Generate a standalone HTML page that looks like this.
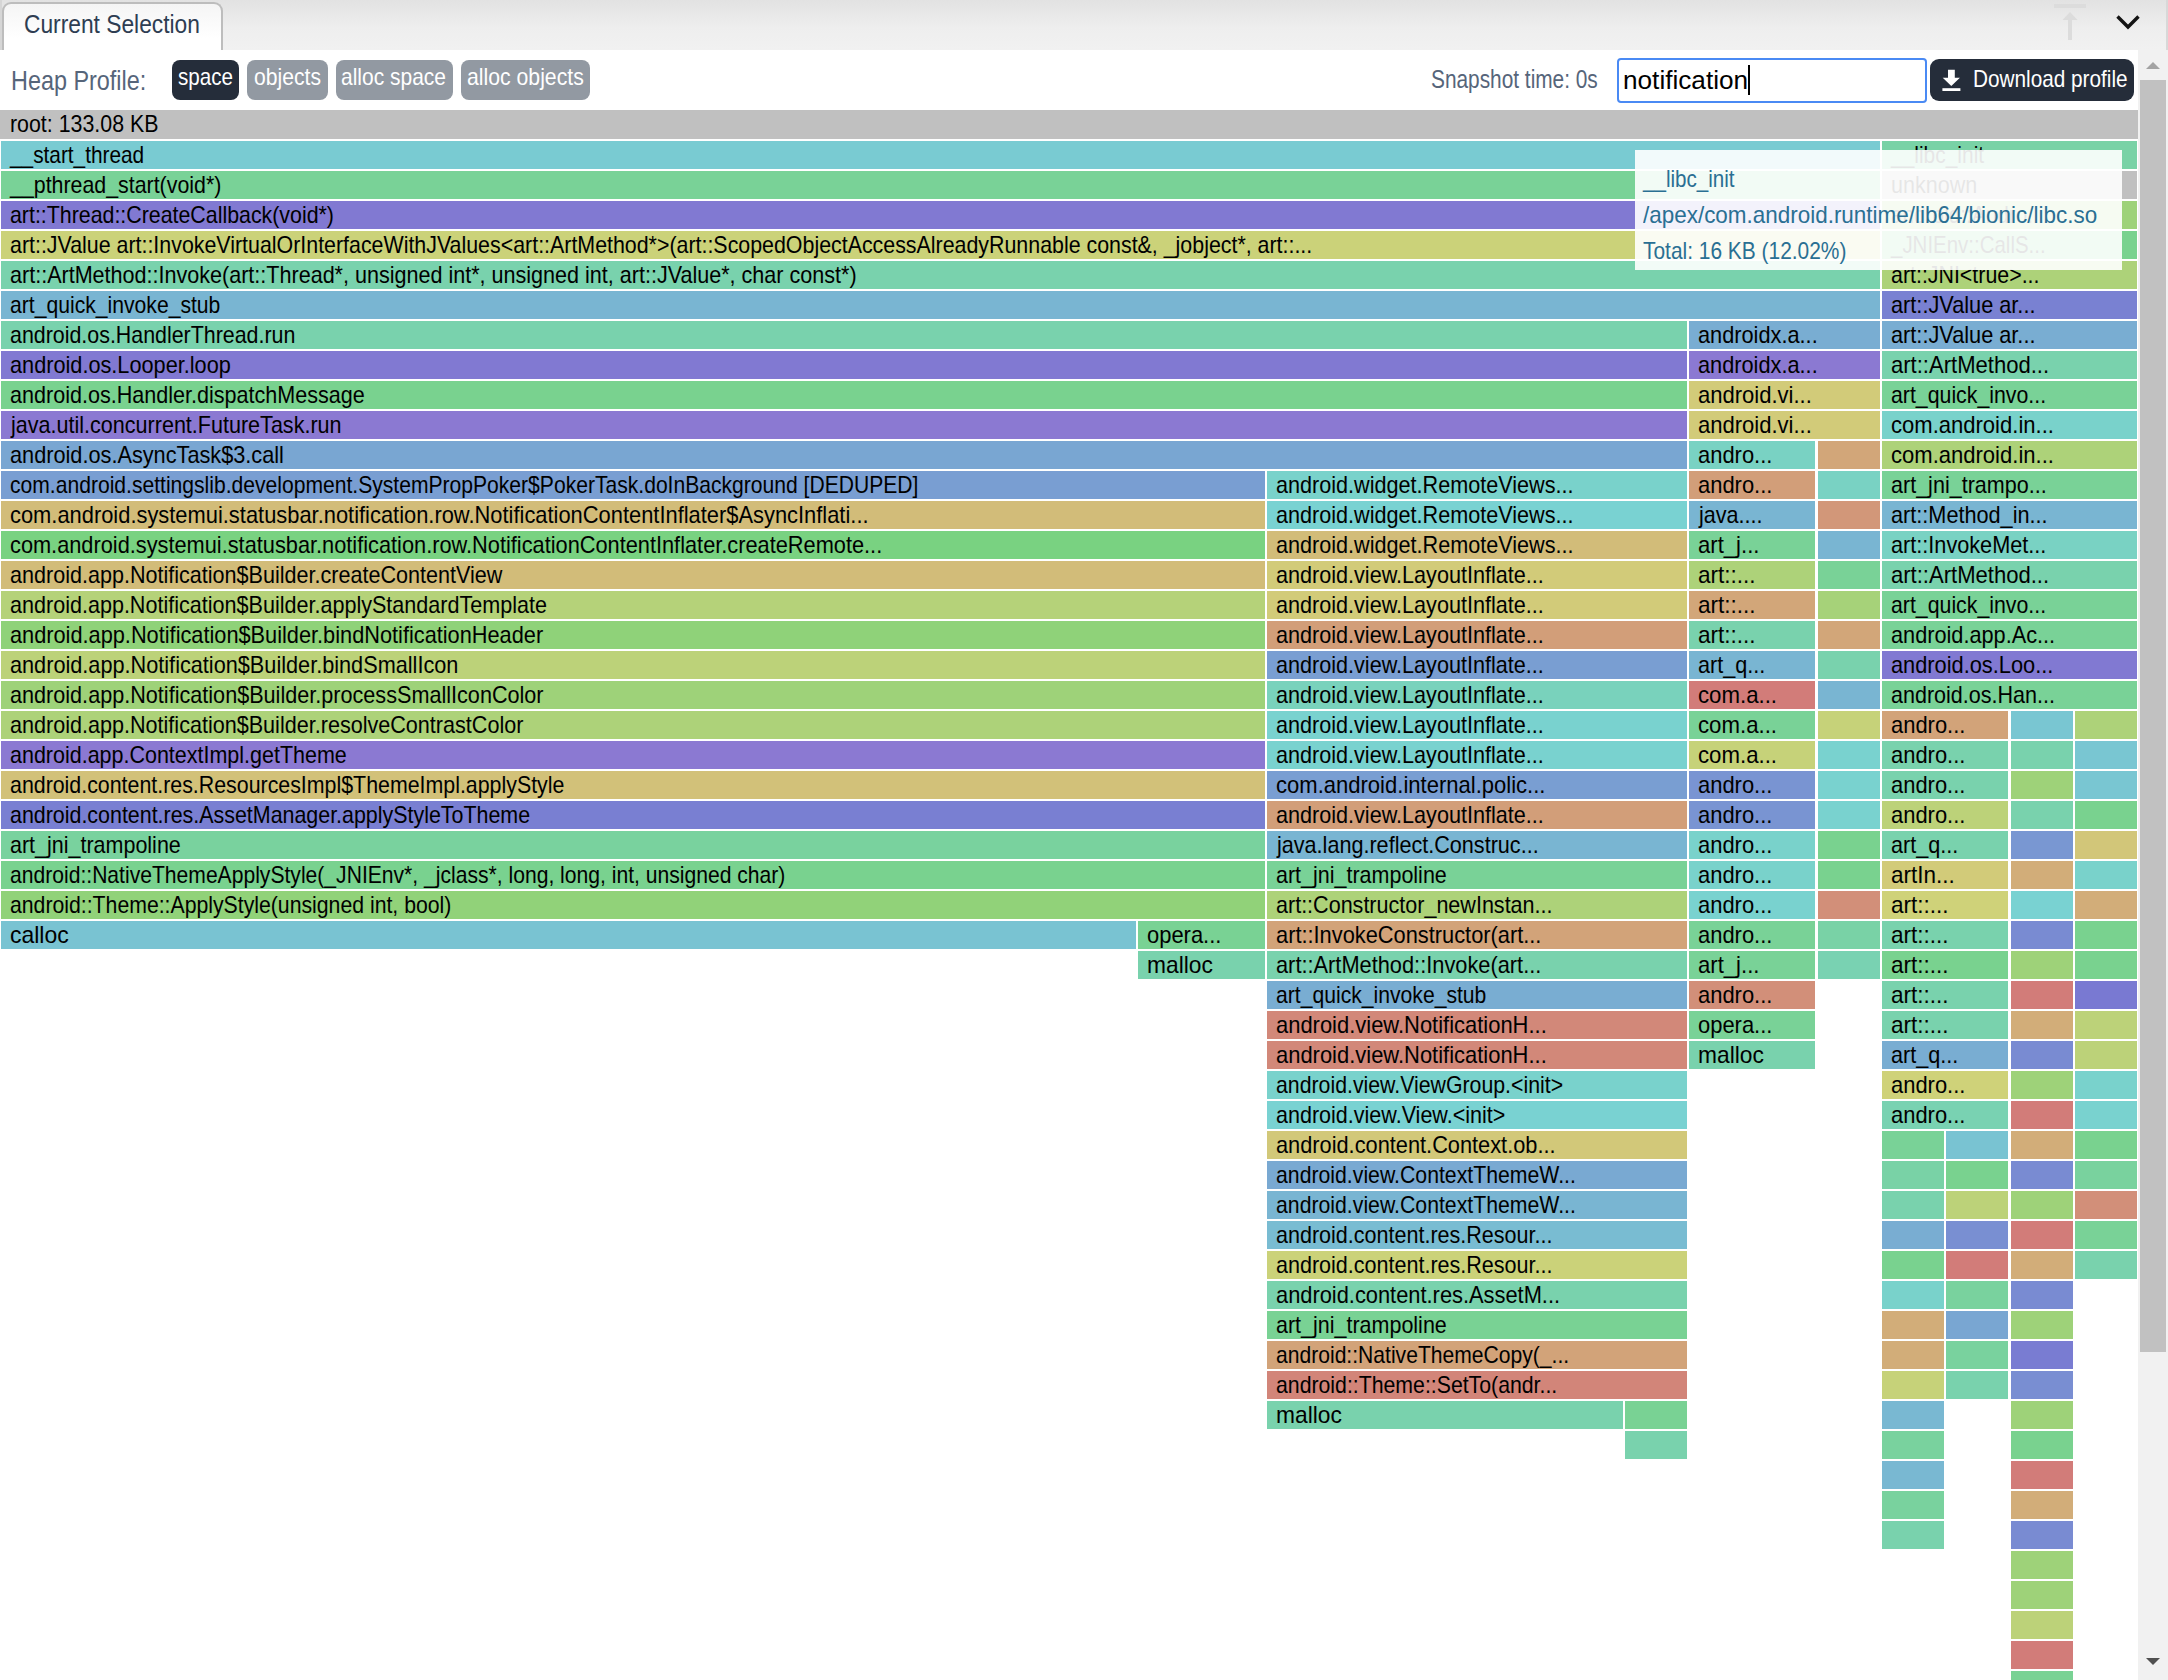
<!DOCTYPE html>
<html><head><meta charset="utf-8"><style>
*{box-sizing:border-box;margin:0;padding:0}
html,body{width:2168px;height:1680px;overflow:hidden;background:#fff;font-family:"Liberation Sans",sans-serif}
.a{position:absolute}
.bar{position:absolute;height:28px;overflow:hidden}
.lb{position:absolute;left:9px;top:0;font-size:24px;line-height:28px;color:#000;white-space:pre;transform-origin:0 0;transform:scaleX(0.89)}
.t{position:absolute;white-space:pre;transform-origin:0 0}
</style></head><body>

<div class="a" style="left:0;top:0;width:2168px;height:50px;background:linear-gradient(#e2e2e2,#eeeeee 55%,#f1f1f1)"></div>
<div class="a" style="left:0;top:0;width:2px;height:50px;background:#d6d6d6"></div>
<div class="a" style="left:2166px;top:0;width:2px;height:50px;background:#d8d8d8"></div>
<div class="a" style="left:2px;top:2px;width:221px;height:48px;border:2px solid #bdbdbd;border-bottom:none;border-radius:9px 9px 0 0;background:linear-gradient(#f5f5f5,#fff 75%)"></div>
<div class="t" style="left:24.10px;top:6.19px;font-size:26px;line-height:36px;color:#2e3d52;transform:scaleX(0.8756);">Current Selection</div>
<svg class="a" style="left:2040px;top:0" width="128" height="50" viewBox="0 0 128 50"><rect x="14" y="4" width="32" height="4" fill="#dcdcdc"/><path d="M30 12 L37.5 20 L32 20 L32 40 L28 40 L28 20 L22.5 20 Z" fill="#dcdcdc"/><path d="M77.5 16.5 L88 27 L98.5 16.5" stroke="#141414" stroke-width="3.4" fill="none"/></svg>
<div class="a" style="left:2138px;top:50px;width:30px;height:1630px;background:#f1f1f1"></div>
<div class="a" style="left:2140px;top:80px;width:26px;height:1272px;background:#c1c1c1"></div>
<svg class="a" style="left:2138px;top:50px" width="30" height="30"><path d="M8 19 L15 12 L22 19 Z" fill="#a3a3a3"/></svg>
<svg class="a" style="left:2138px;top:1650px" width="30" height="30"><path d="M8 8 L22 8 L15 15 Z" fill="#505050"/></svg>
<div class="t" style="left:10.90px;top:60.70px;font-size:28px;line-height:39px;color:#56657a;transform:scaleX(0.8358);">Heap Profile:</div>
<div class="a" style="left:172px;top:60px;width:67px;height:40px;background:#252d3a;border-radius:8px"></div>
<div class="t" style="left:177.80px;top:60.18px;font-size:24px;line-height:34px;color:#fff;transform:scaleX(0.8594);">space</div>
<div class="a" style="left:247px;top:60px;width:81px;height:40px;background:#9299a2;border-radius:8px"></div>
<div class="t" style="left:253.50px;top:60.18px;font-size:24px;line-height:34px;color:#fff;transform:scaleX(0.8803);">objects</div>
<div class="a" style="left:336px;top:60px;width:117px;height:40px;background:#9299a2;border-radius:8px"></div>
<div class="t" style="left:341.40px;top:60.18px;font-size:24px;line-height:34px;color:#fff;transform:scaleX(0.8742);">alloc space</div>
<div class="a" style="left:461px;top:60px;width:129px;height:40px;background:#9299a2;border-radius:8px"></div>
<div class="t" style="left:466.60px;top:60.18px;font-size:24px;line-height:34px;color:#fff;transform:scaleX(0.8841);">alloc objects</div>
<div class="t" style="left:1430.70px;top:61.84px;font-size:25px;line-height:35px;color:#56657a;transform:scaleX(0.8335);">Snapshot time: 0s</div>
<div class="a" style="left:1617px;top:58px;width:310px;height:45px;border:2.4px solid #4a8af4;border-radius:4px;background:#fff"></div>
<div class="t" style="left:1622.80px;top:62.09px;font-size:26px;line-height:36px;color:#000;transform:scaleX(1.0065);">notification</div>
<div class="a" style="left:1748px;top:65px;width:2px;height:30px;background:#000"></div>
<div class="a" style="left:1930px;top:59px;width:204px;height:42px;background:#252d3a;border-radius:9px"></div>
<svg class="a" style="left:1930px;top:59px" width="40" height="42" viewBox="0 0 40 42"><path d="M18 10.7 h6.8 v8 h5.1 l-8.6 8.4 l-8.6 -8.4 h5.3 z" fill="#fff"/><rect x="12.4" y="29.2" width="18" height="2.8" fill="#fff"/></svg>
<div class="t" style="left:1972.70px;top:61.68px;font-size:24px;line-height:34px;color:#fff;transform:scaleX(0.8648);">Download profile</div>
<div class="bar" style="left:0;top:110px;width:2138px;height:29px;background:#c0c0c0"><div class="lb" style="left:10px;line-height:28px">root: 133.08 KB</div></div>
<div class="bar" style="left:1px;top:141px;width:1879px;background:hsl(185,50%,65%)"><div class="lb" style="left:9.47px;transform:scaleX(0.8667)">__start_thread</div></div>
<div class="bar" style="left:1882px;top:141px;width:255px;background:hsl(150,50%,65%)"><div class="lb" style="left:9.47px;transform:scaleX(0.8722)">__libc_init</div></div>
<div class="bar" style="left:1px;top:171px;width:1879px;background:hsl(140,50%,65%)"><div class="lb" style="left:9.49px;transform:scaleX(0.8899)">__pthread_start(void*)</div></div>
<div class="bar" style="left:1882px;top:171px;width:255px;background:#c0c0c0"><div class="lb" style="left:8.60px;transform:scaleX(0.8979)">unknown</div></div>
<div class="bar" style="left:1px;top:201px;width:1879px;background:hsl(245,50%,65%)"><div class="lb" style="left:8.60px;transform:scaleX(0.8896)">art::Thread::CreateCallback(void*)</div></div>
<div class="bar" style="left:1882px;top:201px;width:255px;background:hsl(95,50%,65%)"><div class="lb" style="left:8.60px;transform:scaleX(0.8655)">android::Andro...</div></div>
<div class="bar" style="left:1px;top:231px;width:1879px;background:hsl(65,50%,65%)"><div class="lb" style="left:8.60px;transform:scaleX(0.8907)">art::JValue art::InvokeVirtualOrInterfaceWithJValues&lt;art::ArtMethod*&gt;(art::ScopedObjectAccessAlreadyRunnable const&amp;, _jobject*, art::...</div></div>
<div class="bar" style="left:1882px;top:231px;width:255px;background:hsl(135,50%,65%)"><div class="lb" style="left:9.45px;transform:scaleX(0.8527)">_JNIEnv::CallS...</div></div>
<div class="bar" style="left:1px;top:261px;width:1879px;background:hsl(155,50%,65%)"><div class="lb" style="left:8.60px;transform:scaleX(0.8980)">art::ArtMethod::Invoke(art::Thread*, unsigned int*, unsigned int, art::JValue*, char const*)</div></div>
<div class="bar" style="left:1882px;top:261px;width:255px;background:hsl(85,50%,65%)"><div class="lb" style="left:8.60px;transform:scaleX(0.8904)">art::JNI&lt;true&gt;...</div></div>
<div class="bar" style="left:1px;top:291px;width:1879px;background:hsl(200,50%,65%)"><div class="lb" style="left:8.60px;transform:scaleX(0.8808)">art_quick_invoke_stub</div></div>
<div class="bar" style="left:1882px;top:291px;width:255px;background:hsl(235,50%,65%)"><div class="lb" style="left:8.60px;transform:scaleX(0.9050)">art::JValue ar...</div></div>
<div class="bar" style="left:1px;top:321px;width:1686px;background:hsl(155,50%,65%)"><div class="lb" style="left:8.60px;transform:scaleX(0.8912)">android.os.HandlerThread.run</div></div>
<div class="bar" style="left:1689px;top:321px;width:191px;background:hsl(205,50%,65%)"><div class="lb" style="left:8.60px;transform:scaleX(0.9061)">androidx.a...</div></div>
<div class="bar" style="left:1882px;top:321px;width:255px;background:hsl(205,50%,65%)"><div class="lb" style="left:8.60px;transform:scaleX(0.9050)">art::JValue ar...</div></div>
<div class="bar" style="left:1px;top:351px;width:1686px;background:hsl(245,50%,65%)"><div class="lb" style="left:8.60px;transform:scaleX(0.9041)">android.os.Looper.loop</div></div>
<div class="bar" style="left:1689px;top:351px;width:191px;background:hsl(252,50%,65%)"><div class="lb" style="left:8.60px;transform:scaleX(0.9061)">androidx.a...</div></div>
<div class="bar" style="left:1882px;top:351px;width:255px;background:hsl(155,50%,65%)"><div class="lb" style="left:8.60px;transform:scaleX(0.9186)">art::ArtMethod...</div></div>
<div class="bar" style="left:1px;top:381px;width:1686px;background:hsl(135,50%,65%)"><div class="lb" style="left:8.60px;transform:scaleX(0.8982)">android.os.Handler.dispatchMessage</div></div>
<div class="bar" style="left:1689px;top:381px;width:191px;background:hsl(55,50%,65%)"><div class="lb" style="left:8.60px;transform:scaleX(0.9177)">android.vi...</div></div>
<div class="bar" style="left:1882px;top:381px;width:255px;background:hsl(140,50%,65%)"><div class="lb" style="left:8.60px;transform:scaleX(0.8874)">art_quick_invo...</div></div>
<div class="bar" style="left:1px;top:411px;width:1686px;background:hsl(252,50%,65%)"><div class="lb" style="left:9.50px;transform:scaleX(0.8978)">java.util.concurrent.FutureTask.run</div></div>
<div class="bar" style="left:1689px;top:411px;width:191px;background:hsl(55,50%,65%)"><div class="lb" style="left:8.60px;transform:scaleX(0.9177)">android.vi...</div></div>
<div class="bar" style="left:1882px;top:411px;width:255px;background:hsl(175,50%,65%)"><div class="lb" style="left:8.60px;transform:scaleX(0.9181)">com.android.in...</div></div>
<div class="bar" style="left:1px;top:441px;width:1686px;background:hsl(210,50%,65%)"><div class="lb" style="left:8.60px;transform:scaleX(0.9046)">android.os.AsyncTask$3.call</div></div>
<div class="bar" style="left:1689px;top:441px;width:126px;background:hsl(170,50%,65%)"><div class="lb" style="left:8.60px;transform:scaleX(0.9136)">andro...</div></div>
<div class="bar" style="left:1818px;top:441px;width:62px;background:hsl(30,50%,65%)"></div>
<div class="bar" style="left:1882px;top:441px;width:255px;background:hsl(85,50%,65%)"><div class="lb" style="left:8.60px;transform:scaleX(0.9181)">com.android.in...</div></div>
<div class="bar" style="left:1px;top:471px;width:1264px;background:hsl(215,50%,65%)"><div class="lb" style="left:8.60px;transform:scaleX(0.8787)">com.android.settingslib.development.SystemPropPoker$PokerTask.doInBackground [DEDUPED]</div></div>
<div class="bar" style="left:1267px;top:471px;width:420px;background:hsl(175,50%,65%)"><div class="lb" style="left:8.60px;transform:scaleX(0.9003)">android.widget.RemoteViews...</div></div>
<div class="bar" style="left:1689px;top:471px;width:126px;background:hsl(25,50%,65%)"><div class="lb" style="left:8.60px;transform:scaleX(0.9136)">andro...</div></div>
<div class="bar" style="left:1818px;top:471px;width:62px;background:hsl(170,50%,65%)"></div>
<div class="bar" style="left:1882px;top:471px;width:255px;background:hsl(140,50%,65%)"><div class="lb" style="left:8.60px;transform:scaleX(0.8977)">art_jni_trampo...</div></div>
<div class="bar" style="left:1px;top:501px;width:1264px;background:hsl(45,50%,65%)"><div class="lb" style="left:8.60px;transform:scaleX(0.9116)">com.android.systemui.statusbar.notification.row.NotificationContentInflater$AsyncInflati...</div></div>
<div class="bar" style="left:1267px;top:501px;width:420px;background:hsl(180,50%,65%)"><div class="lb" style="left:8.60px;transform:scaleX(0.9003)">android.widget.RemoteViews...</div></div>
<div class="bar" style="left:1689px;top:501px;width:126px;background:hsl(200,50%,65%)"><div class="lb" style="left:9.50px;transform:scaleX(0.8986)">java....</div></div>
<div class="bar" style="left:1818px;top:501px;width:62px;background:hsl(20,50%,65%)"></div>
<div class="bar" style="left:1882px;top:501px;width:255px;background:hsl(200,50%,65%)"><div class="lb" style="left:8.60px;transform:scaleX(0.9029)">art::Method_in...</div></div>
<div class="bar" style="left:1px;top:531px;width:1264px;background:hsl(125,50%,65%)"><div class="lb" style="left:8.60px;transform:scaleX(0.9068)">com.android.systemui.statusbar.notification.row.NotificationContentInflater.createRemote...</div></div>
<div class="bar" style="left:1267px;top:531px;width:420px;background:hsl(45,50%,65%)"><div class="lb" style="left:8.60px;transform:scaleX(0.9003)">android.widget.RemoteViews...</div></div>
<div class="bar" style="left:1689px;top:531px;width:126px;background:hsl(140,50%,65%)"><div class="lb" style="left:8.60px;transform:scaleX(0.9209)">art_j...</div></div>
<div class="bar" style="left:1818px;top:531px;width:62px;background:hsl(200,50%,65%)"></div>
<div class="bar" style="left:1882px;top:531px;width:255px;background:hsl(170,50%,65%)"><div class="lb" style="left:8.60px;transform:scaleX(0.9029)">art::InvokeMet...</div></div>
<div class="bar" style="left:1px;top:561px;width:1264px;background:hsl(45,50%,65%)"><div class="lb" style="left:8.60px;transform:scaleX(0.8984)">android.app.Notification$Builder.createContentView</div></div>
<div class="bar" style="left:1267px;top:561px;width:420px;background:hsl(55,50%,65%)"><div class="lb" style="left:8.60px;transform:scaleX(0.9000)">android.view.LayoutInflate...</div></div>
<div class="bar" style="left:1689px;top:561px;width:126px;background:hsl(85,50%,65%)"><div class="lb" style="left:8.60px;transform:scaleX(0.9393)">art::...</div></div>
<div class="bar" style="left:1818px;top:561px;width:62px;background:hsl(140,50%,65%)"></div>
<div class="bar" style="left:1882px;top:561px;width:255px;background:hsl(155,50%,65%)"><div class="lb" style="left:8.60px;transform:scaleX(0.9186)">art::ArtMethod...</div></div>
<div class="bar" style="left:1px;top:591px;width:1264px;background:hsl(80,50%,65%)"><div class="lb" style="left:8.60px;transform:scaleX(0.8983)">android.app.Notification$Builder.applyStandardTemplate</div></div>
<div class="bar" style="left:1267px;top:591px;width:420px;background:hsl(55,50%,65%)"><div class="lb" style="left:8.60px;transform:scaleX(0.9000)">android.view.LayoutInflate...</div></div>
<div class="bar" style="left:1689px;top:591px;width:126px;background:hsl(30,50%,65%)"><div class="lb" style="left:8.60px;transform:scaleX(0.9393)">art::...</div></div>
<div class="bar" style="left:1818px;top:591px;width:62px;background:hsl(90,50%,65%)"></div>
<div class="bar" style="left:1882px;top:591px;width:255px;background:hsl(140,50%,65%)"><div class="lb" style="left:8.60px;transform:scaleX(0.8874)">art_quick_invo...</div></div>
<div class="bar" style="left:1px;top:621px;width:1264px;background:hsl(105,50%,65%)"><div class="lb" style="left:8.60px;transform:scaleX(0.9061)">android.app.Notification$Builder.bindNotificationHeader</div></div>
<div class="bar" style="left:1267px;top:621px;width:420px;background:hsl(25,50%,65%)"><div class="lb" style="left:8.60px;transform:scaleX(0.9000)">android.view.LayoutInflate...</div></div>
<div class="bar" style="left:1689px;top:621px;width:126px;background:hsl(155,50%,65%)"><div class="lb" style="left:8.60px;transform:scaleX(0.9393)">art::...</div></div>
<div class="bar" style="left:1818px;top:621px;width:62px;background:hsl(30,50%,65%)"></div>
<div class="bar" style="left:1882px;top:621px;width:255px;background:hsl(140,50%,65%)"><div class="lb" style="left:8.60px;transform:scaleX(0.9044)">android.app.Ac...</div></div>
<div class="bar" style="left:1px;top:651px;width:1264px;background:hsl(75,50%,65%)"><div class="lb" style="left:8.60px;transform:scaleX(0.9034)">android.app.Notification$Builder.bindSmallIcon</div></div>
<div class="bar" style="left:1267px;top:651px;width:420px;background:hsl(215,50%,65%)"><div class="lb" style="left:8.60px;transform:scaleX(0.9000)">android.view.LayoutInflate...</div></div>
<div class="bar" style="left:1689px;top:651px;width:126px;background:hsl(200,50%,65%)"><div class="lb" style="left:8.60px;transform:scaleX(0.9013)">art_q...</div></div>
<div class="bar" style="left:1818px;top:651px;width:62px;background:hsl(155,50%,65%)"></div>
<div class="bar" style="left:1882px;top:651px;width:255px;background:hsl(245,50%,65%)"><div class="lb" style="left:8.60px;transform:scaleX(0.9078)">android.os.Loo...</div></div>
<div class="bar" style="left:1px;top:681px;width:1264px;background:hsl(95,50%,65%)"><div class="lb" style="left:8.60px;transform:scaleX(0.9008)">android.app.Notification$Builder.processSmallIconColor</div></div>
<div class="bar" style="left:1267px;top:681px;width:420px;background:hsl(165,50%,65%)"><div class="lb" style="left:8.60px;transform:scaleX(0.9000)">android.view.LayoutInflate...</div></div>
<div class="bar" style="left:1689px;top:681px;width:126px;background:hsl(2,50%,65%)"><div class="lb" style="left:8.60px;transform:scaleX(0.9259)">com.a...</div></div>
<div class="bar" style="left:1818px;top:681px;width:62px;background:hsl(200,50%,65%)"></div>
<div class="bar" style="left:1882px;top:681px;width:255px;background:hsl(140,50%,65%)"><div class="lb" style="left:8.60px;transform:scaleX(0.8973)">android.os.Han...</div></div>
<div class="bar" style="left:1px;top:711px;width:1264px;background:hsl(85,50%,65%)"><div class="lb" style="left:8.60px;transform:scaleX(0.8991)">android.app.Notification$Builder.resolveContrastColor</div></div>
<div class="bar" style="left:1267px;top:711px;width:420px;background:hsl(178,50%,65%)"><div class="lb" style="left:8.60px;transform:scaleX(0.9000)">android.view.LayoutInflate...</div></div>
<div class="bar" style="left:1689px;top:711px;width:126px;background:hsl(140,50%,65%)"><div class="lb" style="left:8.60px;transform:scaleX(0.9259)">com.a...</div></div>
<div class="bar" style="left:1818px;top:711px;width:62px;background:hsl(68,50%,65%)"></div>
<div class="bar" style="left:1882px;top:711px;width:126px;background:hsl(28,50%,65%)"><div class="lb" style="left:8.60px;transform:scaleX(0.9136)">andro...</div></div>
<div class="bar" style="left:2010.5px;top:711px;width:62.5px;background:hsl(188,50%,65%)"></div>
<div class="bar" style="left:2075px;top:711px;width:62px;background:hsl(85,50%,65%)"></div>
<div class="bar" style="left:1px;top:741px;width:1264px;background:hsl(252,50%,65%)"><div class="lb" style="left:8.60px;transform:scaleX(0.8952)">android.app.ContextImpl.getTheme</div></div>
<div class="bar" style="left:1267px;top:741px;width:420px;background:hsl(178,50%,65%)"><div class="lb" style="left:8.60px;transform:scaleX(0.9000)">android.view.LayoutInflate...</div></div>
<div class="bar" style="left:1689px;top:741px;width:126px;background:hsl(68,50%,65%)"><div class="lb" style="left:8.60px;transform:scaleX(0.9259)">com.a...</div></div>
<div class="bar" style="left:1818px;top:741px;width:62px;background:hsl(178,50%,65%)"></div>
<div class="bar" style="left:1882px;top:741px;width:126px;background:hsl(155,50%,65%)"><div class="lb" style="left:8.60px;transform:scaleX(0.9136)">andro...</div></div>
<div class="bar" style="left:2010.5px;top:741px;width:62.5px;background:hsl(155,50%,65%)"></div>
<div class="bar" style="left:2075px;top:741px;width:62px;background:hsl(188,50%,65%)"></div>
<div class="bar" style="left:1px;top:771px;width:1264px;background:hsl(48,50%,65%)"><div class="lb" style="left:8.60px;transform:scaleX(0.8899)">android.content.res.ResourcesImpl$ThemeImpl.applyStyle</div></div>
<div class="bar" style="left:1267px;top:771px;width:420px;background:hsl(215,50%,65%)"><div class="lb" style="left:8.60px;transform:scaleX(0.9181)">com.android.internal.polic...</div></div>
<div class="bar" style="left:1689px;top:771px;width:126px;background:hsl(222,50%,65%)"><div class="lb" style="left:8.60px;transform:scaleX(0.9136)">andro...</div></div>
<div class="bar" style="left:1818px;top:771px;width:62px;background:hsl(178,50%,65%)"></div>
<div class="bar" style="left:1882px;top:771px;width:126px;background:hsl(155,50%,65%)"><div class="lb" style="left:8.60px;transform:scaleX(0.9136)">andro...</div></div>
<div class="bar" style="left:2010.5px;top:771px;width:62.5px;background:hsl(95,50%,65%)"></div>
<div class="bar" style="left:2075px;top:771px;width:62px;background:hsl(188,50%,65%)"></div>
<div class="bar" style="left:1px;top:801px;width:1264px;background:hsl(236,50%,65%)"><div class="lb" style="left:8.60px;transform:scaleX(0.8921)">android.content.res.AssetManager.applyStyleToTheme</div></div>
<div class="bar" style="left:1267px;top:801px;width:420px;background:hsl(25,50%,65%)"><div class="lb" style="left:8.60px;transform:scaleX(0.9000)">android.view.LayoutInflate...</div></div>
<div class="bar" style="left:1689px;top:801px;width:126px;background:hsl(222,50%,65%)"><div class="lb" style="left:8.60px;transform:scaleX(0.9136)">andro...</div></div>
<div class="bar" style="left:1818px;top:801px;width:62px;background:hsl(178,50%,65%)"></div>
<div class="bar" style="left:1882px;top:801px;width:126px;background:hsl(75,50%,65%)"><div class="lb" style="left:8.60px;transform:scaleX(0.9136)">andro...</div></div>
<div class="bar" style="left:2010.5px;top:801px;width:62.5px;background:hsl(155,50%,65%)"></div>
<div class="bar" style="left:2075px;top:801px;width:62px;background:hsl(135,50%,65%)"></div>
<div class="bar" style="left:1px;top:831px;width:1264px;background:hsl(145,50%,65%)"><div class="lb" style="left:8.60px;transform:scaleX(0.8953)">art_jni_trampoline</div></div>
<div class="bar" style="left:1267px;top:831px;width:420px;background:hsl(200,50%,65%)"><div class="lb" style="left:9.50px;transform:scaleX(0.8997)">java.lang.reflect.Construc...</div></div>
<div class="bar" style="left:1689px;top:831px;width:126px;background:hsl(175,50%,65%)"><div class="lb" style="left:8.60px;transform:scaleX(0.9136)">andro...</div></div>
<div class="bar" style="left:1818px;top:831px;width:62px;background:hsl(135,50%,65%)"></div>
<div class="bar" style="left:1882px;top:831px;width:126px;background:hsl(155,50%,65%)"><div class="lb" style="left:8.60px;transform:scaleX(0.9013)">art_q...</div></div>
<div class="bar" style="left:2010.5px;top:831px;width:62.5px;background:hsl(220,50%,65%)"></div>
<div class="bar" style="left:2075px;top:831px;width:62px;background:hsl(52,50%,65%)"></div>
<div class="bar" style="left:1px;top:861px;width:1264px;background:hsl(135,50%,65%)"><div class="lb" style="left:8.60px;transform:scaleX(0.8793)">android::NativeThemeApplyStyle(_JNIEnv*, _jclass*, long, long, int, unsigned char)</div></div>
<div class="bar" style="left:1267px;top:861px;width:420px;background:hsl(140,50%,65%)"><div class="lb" style="left:8.60px;transform:scaleX(0.8953)">art_jni_trampoline</div></div>
<div class="bar" style="left:1689px;top:861px;width:126px;background:hsl(175,50%,65%)"><div class="lb" style="left:8.60px;transform:scaleX(0.9136)">andro...</div></div>
<div class="bar" style="left:1818px;top:861px;width:62px;background:hsl(135,50%,65%)"></div>
<div class="bar" style="left:1882px;top:861px;width:126px;background:hsl(55,50%,65%)"><div class="lb" style="left:8.60px;transform:scaleX(0.9368)">artIn...</div></div>
<div class="bar" style="left:2010.5px;top:861px;width:62.5px;background:hsl(35,50%,65%)"></div>
<div class="bar" style="left:2075px;top:861px;width:62px;background:hsl(175,50%,65%)"></div>
<div class="bar" style="left:1px;top:891px;width:1264px;background:hsl(104,50%,65%)"><div class="lb" style="left:8.60px;transform:scaleX(0.8846)">android::Theme::ApplyStyle(unsigned int, bool)</div></div>
<div class="bar" style="left:1267px;top:891px;width:420px;background:hsl(85,50%,65%)"><div class="lb" style="left:8.60px;transform:scaleX(0.8974)">art::Constructor_newInstan...</div></div>
<div class="bar" style="left:1689px;top:891px;width:126px;background:hsl(178,50%,65%)"><div class="lb" style="left:8.60px;transform:scaleX(0.9136)">andro...</div></div>
<div class="bar" style="left:1818px;top:891px;width:62px;background:hsl(15,50%,65%)"></div>
<div class="bar" style="left:1882px;top:891px;width:126px;background:hsl(62,50%,65%)"><div class="lb" style="left:8.60px;transform:scaleX(0.9393)">art::...</div></div>
<div class="bar" style="left:2010.5px;top:891px;width:62.5px;background:hsl(180,50%,65%)"></div>
<div class="bar" style="left:2075px;top:891px;width:62px;background:hsl(35,50%,65%)"></div>
<div class="bar" style="left:1px;top:921px;width:1135px;background:hsl(190,50%,65%)"><div class="lb" style="left:8.60px;transform:scaleX(0.9574)">calloc</div></div>
<div class="bar" style="left:1138px;top:921px;width:127px;background:hsl(138,50%,65%)"><div class="lb" style="left:8.60px;transform:scaleX(0.9136)">opera...</div></div>
<div class="bar" style="left:1267px;top:921px;width:420px;background:hsl(28,50%,65%)"><div class="lb" style="left:8.60px;transform:scaleX(0.9086)">art::InvokeConstructor(art...</div></div>
<div class="bar" style="left:1689px;top:921px;width:126px;background:hsl(140,50%,65%)"><div class="lb" style="left:8.60px;transform:scaleX(0.9136)">andro...</div></div>
<div class="bar" style="left:1818px;top:921px;width:62px;background:hsl(150,50%,65%)"></div>
<div class="bar" style="left:1882px;top:921px;width:126px;background:hsl(155,50%,65%)"><div class="lb" style="left:8.60px;transform:scaleX(0.9393)">art::...</div></div>
<div class="bar" style="left:2010.5px;top:921px;width:62.5px;background:hsl(228,50%,65%)"></div>
<div class="bar" style="left:2075px;top:921px;width:62px;background:hsl(135,50%,65%)"></div>
<div class="bar" style="left:1138px;top:951px;width:127px;background:hsl(155,50%,65%)"><div class="lb" style="left:8.60px;transform:scaleX(0.9493)">malloc</div></div>
<div class="bar" style="left:1267px;top:951px;width:420px;background:hsl(155,50%,65%)"><div class="lb" style="left:8.60px;transform:scaleX(0.9082)">art::ArtMethod::Invoke(art...</div></div>
<div class="bar" style="left:1689px;top:951px;width:126px;background:hsl(140,50%,65%)"><div class="lb" style="left:8.60px;transform:scaleX(0.9209)">art_j...</div></div>
<div class="bar" style="left:1818px;top:951px;width:62px;background:hsl(158,50%,65%)"></div>
<div class="bar" style="left:1882px;top:951px;width:126px;background:hsl(135,50%,65%)"><div class="lb" style="left:8.60px;transform:scaleX(0.9393)">art::...</div></div>
<div class="bar" style="left:2010.5px;top:951px;width:62.5px;background:hsl(95,50%,65%)"></div>
<div class="bar" style="left:2075px;top:951px;width:62px;background:hsl(135,50%,65%)"></div>
<div class="bar" style="left:1267px;top:981px;width:420px;background:hsl(205,50%,65%)"><div class="lb" style="left:8.60px;transform:scaleX(0.8808)">art_quick_invoke_stub</div></div>
<div class="bar" style="left:1689px;top:981px;width:126px;background:hsl(15,50%,65%)"><div class="lb" style="left:8.60px;transform:scaleX(0.9136)">andro...</div></div>
<div class="bar" style="left:1882px;top:981px;width:126px;background:hsl(155,50%,65%)"><div class="lb" style="left:8.60px;transform:scaleX(0.9393)">art::...</div></div>
<div class="bar" style="left:2010.5px;top:981px;width:62.5px;background:hsl(2,50%,65%)"></div>
<div class="bar" style="left:2075px;top:981px;width:62px;background:hsl(240,50%,65%)"></div>
<div class="bar" style="left:1267px;top:1011px;width:420px;background:hsl(10,50%,65%)"><div class="lb" style="left:8.60px;transform:scaleX(0.9142)">android.view.NotificationH...</div></div>
<div class="bar" style="left:1689px;top:1011px;width:126px;background:hsl(140,50%,65%)"><div class="lb" style="left:8.60px;transform:scaleX(0.9136)">opera...</div></div>
<div class="bar" style="left:1882px;top:1011px;width:126px;background:hsl(155,50%,65%)"><div class="lb" style="left:8.60px;transform:scaleX(0.9393)">art::...</div></div>
<div class="bar" style="left:2010.5px;top:1011px;width:62.5px;background:hsl(35,50%,65%)"></div>
<div class="bar" style="left:2075px;top:1011px;width:62px;background:hsl(75,50%,65%)"></div>
<div class="bar" style="left:1267px;top:1041px;width:420px;background:hsl(10,50%,65%)"><div class="lb" style="left:8.60px;transform:scaleX(0.9142)">android.view.NotificationH...</div></div>
<div class="bar" style="left:1689px;top:1041px;width:126px;background:hsl(155,50%,65%)"><div class="lb" style="left:8.60px;transform:scaleX(0.9493)">malloc</div></div>
<div class="bar" style="left:1882px;top:1041px;width:126px;background:hsl(205,50%,65%)"><div class="lb" style="left:8.60px;transform:scaleX(0.9013)">art_q...</div></div>
<div class="bar" style="left:2010.5px;top:1041px;width:62.5px;background:hsl(228,50%,65%)"></div>
<div class="bar" style="left:2075px;top:1041px;width:62px;background:hsl(75,50%,65%)"></div>
<div class="bar" style="left:1267px;top:1071px;width:420px;background:hsl(176,50%,65%)"><div class="lb" style="left:8.60px;transform:scaleX(0.8867)">android.view.ViewGroup.&lt;init&gt;</div></div>
<div class="bar" style="left:1882px;top:1071px;width:126px;background:hsl(62,50%,65%)"><div class="lb" style="left:8.60px;transform:scaleX(0.9136)">andro...</div></div>
<div class="bar" style="left:2010.5px;top:1071px;width:62.5px;background:hsl(95,50%,65%)"></div>
<div class="bar" style="left:2075px;top:1071px;width:62px;background:hsl(176,50%,65%)"></div>
<div class="bar" style="left:1267px;top:1101px;width:420px;background:hsl(180,50%,65%)"><div class="lb" style="left:8.60px;transform:scaleX(0.8969)">android.view.View.&lt;init&gt;</div></div>
<div class="bar" style="left:1882px;top:1101px;width:126px;background:hsl(158,50%,65%)"><div class="lb" style="left:8.60px;transform:scaleX(0.9136)">andro...</div></div>
<div class="bar" style="left:2010.5px;top:1101px;width:62.5px;background:hsl(2,50%,65%)"></div>
<div class="bar" style="left:2075px;top:1101px;width:62px;background:hsl(178,50%,65%)"></div>
<div class="bar" style="left:1267px;top:1131px;width:420px;background:hsl(53,50%,65%)"><div class="lb" style="left:8.60px;transform:scaleX(0.9071)">android.content.Context.ob...</div></div>
<div class="bar" style="left:1882px;top:1131px;width:62px;background:hsl(140,50%,65%)"></div>
<div class="bar" style="left:1946px;top:1131px;width:62px;background:hsl(190,50%,65%)"></div>
<div class="bar" style="left:2010.5px;top:1131px;width:62.5px;background:hsl(35,50%,65%)"></div>
<div class="bar" style="left:2075px;top:1131px;width:62px;background:hsl(135,50%,65%)"></div>
<div class="bar" style="left:1267px;top:1161px;width:420px;background:hsl(208,50%,65%)"><div class="lb" style="left:8.60px;transform:scaleX(0.8850)">android.view.ContextThemeW...</div></div>
<div class="bar" style="left:1882px;top:1161px;width:62px;background:hsl(150,50%,65%)"></div>
<div class="bar" style="left:1946px;top:1161px;width:62px;background:hsl(135,50%,65%)"></div>
<div class="bar" style="left:2010.5px;top:1161px;width:62.5px;background:hsl(228,50%,65%)"></div>
<div class="bar" style="left:2075px;top:1161px;width:62px;background:hsl(145,50%,65%)"></div>
<div class="bar" style="left:1267px;top:1191px;width:420px;background:hsl(200,50%,65%)"><div class="lb" style="left:8.60px;transform:scaleX(0.8850)">android.view.ContextThemeW...</div></div>
<div class="bar" style="left:1882px;top:1191px;width:62px;background:hsl(155,50%,65%)"></div>
<div class="bar" style="left:1946px;top:1191px;width:62px;background:hsl(75,50%,65%)"></div>
<div class="bar" style="left:2010.5px;top:1191px;width:62.5px;background:hsl(95,50%,65%)"></div>
<div class="bar" style="left:2075px;top:1191px;width:62px;background:hsl(15,50%,65%)"></div>
<div class="bar" style="left:1267px;top:1221px;width:420px;background:hsl(195,50%,65%)"><div class="lb" style="left:8.60px;transform:scaleX(0.8971)">android.content.res.Resour...</div></div>
<div class="bar" style="left:1882px;top:1221px;width:62px;background:hsl(205,50%,65%)"></div>
<div class="bar" style="left:1946px;top:1221px;width:62px;background:hsl(225,50%,65%)"></div>
<div class="bar" style="left:2010.5px;top:1221px;width:62.5px;background:hsl(2,50%,65%)"></div>
<div class="bar" style="left:2075px;top:1221px;width:62px;background:hsl(140,50%,65%)"></div>
<div class="bar" style="left:1267px;top:1251px;width:420px;background:hsl(65,50%,65%)"><div class="lb" style="left:8.60px;transform:scaleX(0.8971)">android.content.res.Resour...</div></div>
<div class="bar" style="left:1882px;top:1251px;width:62px;background:hsl(135,50%,65%)"></div>
<div class="bar" style="left:1946px;top:1251px;width:62px;background:hsl(2,50%,65%)"></div>
<div class="bar" style="left:2010.5px;top:1251px;width:62.5px;background:hsl(35,50%,65%)"></div>
<div class="bar" style="left:2075px;top:1251px;width:62px;background:hsl(155,50%,65%)"></div>
<div class="bar" style="left:1267px;top:1281px;width:420px;background:hsl(155,50%,65%)"><div class="lb" style="left:8.60px;transform:scaleX(0.9099)">android.content.res.AssetM...</div></div>
<div class="bar" style="left:1882px;top:1281px;width:62px;background:hsl(175,50%,65%)"></div>
<div class="bar" style="left:1946px;top:1281px;width:62px;background:hsl(145,50%,65%)"></div>
<div class="bar" style="left:2010.5px;top:1281px;width:62.5px;background:hsl(228,50%,65%)"></div>
<div class="bar" style="left:1267px;top:1311px;width:420px;background:hsl(138,50%,65%)"><div class="lb" style="left:8.60px;transform:scaleX(0.8953)">art_jni_trampoline</div></div>
<div class="bar" style="left:1882px;top:1311px;width:62px;background:hsl(35,50%,65%)"></div>
<div class="bar" style="left:1946px;top:1311px;width:62px;background:hsl(210,50%,65%)"></div>
<div class="bar" style="left:2010.5px;top:1311px;width:62.5px;background:hsl(95,50%,65%)"></div>
<div class="bar" style="left:1267px;top:1341px;width:420px;background:hsl(28,50%,65%)"><div class="lb" style="left:8.60px;transform:scaleX(0.8790)">android::NativeThemeCopy(_...</div></div>
<div class="bar" style="left:1882px;top:1341px;width:62px;background:hsl(35,50%,65%)"></div>
<div class="bar" style="left:1946px;top:1341px;width:62px;background:hsl(145,50%,65%)"></div>
<div class="bar" style="left:2010.5px;top:1341px;width:62.5px;background:hsl(238,50%,65%)"></div>
<div class="bar" style="left:1267px;top:1371px;width:420px;background:hsl(8,50%,65%)"><div class="lb" style="left:8.60px;transform:scaleX(0.8858)">android::Theme::SetTo(andr...</div></div>
<div class="bar" style="left:1882px;top:1371px;width:62px;background:hsl(68,50%,65%)"></div>
<div class="bar" style="left:1946px;top:1371px;width:62px;background:hsl(155,50%,65%)"></div>
<div class="bar" style="left:2010.5px;top:1371px;width:62.5px;background:hsl(226,50%,65%)"></div>
<div class="bar" style="left:1267px;top:1401px;width:355.5px;background:hsl(155,50%,65%)"><div class="lb" style="left:8.60px;transform:scaleX(0.9493)">malloc</div></div>
<div class="bar" style="left:1625px;top:1401px;width:62px;background:hsl(138,50%,65%)"></div>
<div class="bar" style="left:1882px;top:1401px;width:62px;background:hsl(198,50%,65%)"></div>
<div class="bar" style="left:2010.5px;top:1401px;width:62.5px;background:hsl(95,50%,65%)"></div>
<div class="bar" style="left:1625px;top:1431px;width:62px;background:hsl(155,50%,65%)"></div>
<div class="bar" style="left:1882px;top:1431px;width:62px;background:hsl(145,50%,65%)"></div>
<div class="bar" style="left:2010.5px;top:1431px;width:62.5px;background:hsl(135,50%,65%)"></div>
<div class="bar" style="left:1882px;top:1461px;width:62px;background:hsl(198,50%,65%)"></div>
<div class="bar" style="left:2010.5px;top:1461px;width:62.5px;background:hsl(2,50%,65%)"></div>
<div class="bar" style="left:1882px;top:1491px;width:62px;background:hsl(145,50%,65%)"></div>
<div class="bar" style="left:2010.5px;top:1491px;width:62.5px;background:hsl(35,50%,65%)"></div>
<div class="bar" style="left:1882px;top:1521px;width:62px;background:hsl(155,50%,65%)"></div>
<div class="bar" style="left:2010.5px;top:1521px;width:62.5px;background:hsl(228,50%,65%)"></div>
<div class="bar" style="left:2010.5px;top:1551px;width:62.5px;background:hsl(95,50%,65%)"></div>
<div class="bar" style="left:2010.5px;top:1581px;width:62.5px;background:hsl(95,50%,65%)"></div>
<div class="bar" style="left:2010.5px;top:1611px;width:62.5px;background:hsl(75,50%,65%)"></div>
<div class="bar" style="left:2010.5px;top:1641px;width:62.5px;background:hsl(2,50%,65%)"></div>
<div class="bar" style="left:2010.5px;top:1671px;width:62.5px;background:hsl(138,50%,65%)"></div>
<div class="a" style="left:1635px;top:150px;width:487px;height:120px;background:rgba(255,255,255,0.9)"></div>
<div class="t" style="left:1643.46px;top:161.68px;font-size:24px;line-height:34px;color:#2a6f93;transform:scaleX(0.8574);">__libc_init</div>
<div class="t" style="left:1642.60px;top:197.68px;font-size:24px;line-height:34px;color:#2a6f93;transform:scaleX(0.9352);">/apex/com.android.runtime/lib64/bionic/libc.so</div>
<div class="t" style="left:1642.60px;top:233.68px;font-size:24px;line-height:34px;color:#2a6f93;transform:scaleX(0.8712);">Total: 16 KB (12.02%)</div>
</body></html>
